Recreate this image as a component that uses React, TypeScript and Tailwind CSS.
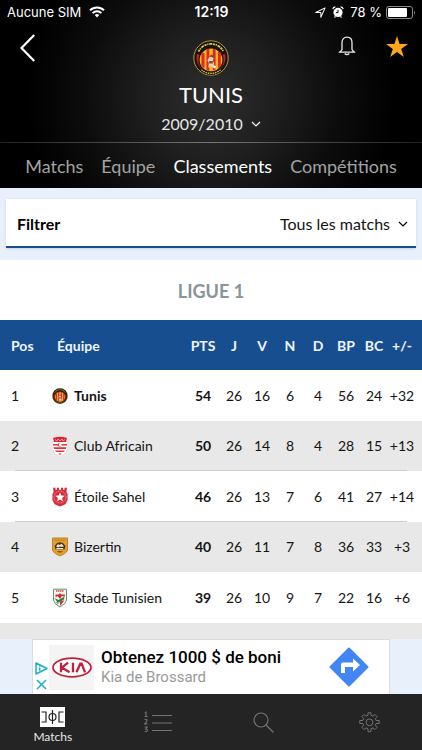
import { useState } from 'react';

type Team = {
  pos: number;
  name: string;
  crest: () => React.JSX.Element;
  pts: number;
  stats: number[];
  diff: string;
};

const TunisCrest = ({ className }: { className: string }) => (
  <svg viewBox="0 0 36 36" className={className} aria-hidden="true">
    <circle cx="18" cy="18" r="17.2" fill="#171512" stroke="#b39a3c" strokeWidth="1" />
    <path d="M4 14a14.500 14.500 0 1 0 28 0l-3 1v8q-4 8-11 8T7 23v-8z" fill="#c5202b" />
    <circle cx="18" cy="20" r="12" fill="#f5b719" stroke="#171512" strokeWidth="1.200" />
    <path d="M8.500 13h3v15.500l-3-3zM13.500 9h2.800v22l-2.800-1zM19.800 9h2.800v20.500l-2.800 1zM25 12h2.800v13.500l-2.800 3z" fill="#e0242b" />
    <path d="M5.300 12a13.900 13.900 0 0 1 25.400 0" fill="none" stroke="#171512" strokeWidth="4" />
    <path d="M5.500 11.600a14 14 0 0 1 25 0" fill="none" stroke="#e3c748" strokeWidth="1.800" strokeDasharray="2.200 .7 1.200 .8 3 .7" />
    <path d="M8.400 29.500a14.600 14.600 0 0 0 19.200 0" fill="none" stroke="#171512" strokeWidth="3" />
    <path d="M8.400 29.800a14.800 14.800 0 0 0 19.200 0" fill="none" stroke="#d2b43f" strokeWidth="1.400" strokeDasharray="1.600 .8" />
    <path d="M16.200 17.200l3-1 1.400 2-.8 2.400 1.400 2.800-.8 4.200h-1.800l-.6-2.800-1 2.800h-1.600l.4-5-1.400-2z" fill="#e6cfae" />
    <path d="M15.800 16.400l3-1.800 2.200 1.600-1 1.400zM16.200 21h3.600v2.600h-3.600z" fill="#6b5634" />
    <circle cx="21.600" cy="27" r="1.400" fill="#fff" />
  </svg>
);

const SmallTunis = () => <TunisCrest className="h-4 w-4 shrink-0" />;

const AfricainCrest = () => (
  <svg viewBox="0 0 16 20" className="h-5 w-4 shrink-0" aria-hidden="true">
    <path d="M1 6h14v7q-2 5-7 6.500q-5-1.500-7-6.500z" fill="#fff" />
    <path d="M1 2q7-2.400 14 0l-1 4H2z" fill="#dc2634" />
    <path d="M3 3.600l2 1.400 1-2 2 2 2-2 1 2 2-1.400" fill="none" stroke="#f6c4c7" strokeWidth=".7" />
    <path d="M1 8h5.500v1.600H1zM9.500 8H15v1.600H9.500zM1.500 11.300h13l-.6 1.600H2zM3 14.600h10l-1.400 1.500H4.600zM6.300 17.600h3.400L8 19z" fill="#e3303c" />
    <path d="M8 6.800a2 2 0 1 0 1.200 3.500 1.700 1.700 0 1 1 0-3z" fill="#dc2634" />
  </svg>
);

const EtoileCrest = () => (
  <svg viewBox="0 0 16 20" className="h-5 w-4 shrink-0" aria-hidden="true">
    <path d="M1 .8h2.500v2h1.500v-2h2v2h2v-2h2v2h1.500v-2H15l-.6 4.200 1.200 2v6l-2.200 4.200L8 19.500l-5.400-2.300L.4 13V7l1.200-2z" fill="#d62c3c" />
    <circle cx="8" cy="10" r="6" fill="none" stroke="#f3b3b8" strokeWidth=".8" strokeDasharray="1 .7" />
    <path d="M8 5.200l1.300 3.200 3.500.3-2.700 2.200.9 3.500-3-1.900-3 1.900.9-3.500-2.700-2.200 3.500-.3z" fill="#fff" />
  </svg>
);

const BizertinCrest = () => (
  <svg viewBox="0 0 16 20" className="h-5 w-4 shrink-0" aria-hidden="true">
    <path d="M.5 1h15v12.500q-1.500 3-7.500 5.500Q2 16.500.5 13.500z" fill="#e9a02b" stroke="#b57b22" strokeWidth=".9" />
    <path d="M2.500 3.200h11" stroke="#b57b22" strokeWidth="1.200" strokeDasharray="1.200 .5" />
    <path d="M2.500 9l2.500-3 3-.8L11 6l2.500 3-1 3.500H3.500z" fill="#3f3420" />
    <path d="M4 9.400l2-2.400 1.500 1 2-1.300 2.500 2.500-2 .9-2-.7-1.800 1zM4.500 11h6.500l.5 1.200H4z" fill="#f2e3c0" />
    <path d="M5 14h6l-1.500 1.500h-3z" fill="#7d5a20" />
  </svg>
);

const StadeCrest = () => (
  <svg viewBox="0 0 16 20" className="h-5 w-4 shrink-0" aria-hidden="true">
    <path d="M1.500 1.200h13V12q-.5 4-6.500 7-6-3-6.500-7z" fill="#f7f7f2" stroke="#5f9468" strokeWidth="1" />
    <path d="M4 3h8" stroke="#d9444d" strokeWidth="1.500" strokeDasharray="1.500 .5" />
    <path d="M3.500 6.500h3l1.500-1.300 1.500 1.300h3.300v2.200l-3-.7L8 11 5.800 8.300l-2.300.6z" fill="#d8292f" />
    <path d="M2.500 10l4 2 5.700-3.200v2.400l-4.500 3-2.200.2z" fill="#2f7f45" />
    <path d="M8 13.500l4.500-1.300L8 18z" fill="#d8292f" />
    <path d="M3.500 13.500l3 1.500-.5 1.500z" fill="#3b8b50" />
  </svg>
);

const teams: Team[] = [
  { pos: 1, name: 'Tunis', crest: SmallTunis, pts: 54, stats: [26, 16, 6, 4, 56, 24], diff: '+32' },
  { pos: 2, name: 'Club Africain', crest: AfricainCrest, pts: 50, stats: [26, 14, 8, 4, 28, 15], diff: '+13' },
  { pos: 3, name: 'Étoile Sahel', crest: EtoileCrest, pts: 46, stats: [26, 13, 7, 6, 41, 27], diff: '+14' },
  { pos: 4, name: 'Bizertin', crest: BizertinCrest, pts: 40, stats: [26, 11, 7, 8, 36, 33], diff: '+3' },
  { pos: 5, name: 'Stade Tunisien', crest: StadeCrest, pts: 39, stats: [26, 10, 9, 7, 22, 16], diff: '+6' },
];

const sections = ['Matchs', 'Équipe', 'Classements', 'Compétitions'];

const Chevron = () => (
  <svg viewBox="0 0 10 6" className="pointer-events-none h-[6px] w-[10px]" fill="none" stroke="currentColor" strokeWidth="1.2" aria-hidden="true">
    <path d="M1 1l4 4 4-4" />
  </svg>
);

const StatusBar = () => (
  <div className="grid h-6 grid-cols-3 items-center pl-[7px] pr-[6px] font-['Inter',sans-serif] text-[13px] leading-6 text-white">
    <div className="flex items-center gap-2">
      <span className="whitespace-nowrap">Aucune SIM</span>
      <svg viewBox="0 0 16 12" className="h-3 w-4" fill="none" stroke="#fff" strokeWidth="2" aria-hidden="true">
        <path d="M1 4.300a10 10 0 0 1 14 0M3.600 7.100a6.200 6.200 0 0 1 8.800 0" />
        <path d="M5.700 9a3.300 3.300 0 0 1 4.600 0L8 11.500z" fill="#fff" stroke="none" />
      </svg>
    </div>
    <span className="text-center text-sm font-semibold">12:19</span>
    <div className="flex items-center justify-end gap-[6px]">
      <svg viewBox="0 0 12 12" className="h-[11px] w-[11px] shrink-0" fill="none" stroke="#fff" strokeWidth="1.100" strokeLinejoin="round" aria-hidden="true">
        <path d="M.8 6L11 1 6.400 11.200V6z" />
      </svg>
      <svg viewBox="0 0 12 12" className="h-3 w-3 shrink-0" aria-hidden="true">
        <circle cx="6" cy="6.400" r="4.600" fill="#fff" />
        <path d="M.8 3.200A3 3 0 0 1 3.400.8M8.600.8a3 3 0 0 1 2.600 2.400M2.500 11.500l1-1.200M9.500 11.500l-1-1.200" stroke="#fff" strokeWidth="1.200" fill="none" />
        <path d="M6 3.800v2.800H3.900" stroke="#000" fill="none" />
      </svg>
      <span className="whitespace-nowrap">78 %</span>
      <svg viewBox="0 0 30 13" className="-ml-[2px] h-[13px] w-[30px] shrink-0" aria-hidden="true">
        <rect x=".5" y=".5" width="26" height="12" rx="2.500" fill="none" stroke="#8a8a8a" />
        <rect x="2" y="2" width="19" height="9" rx="1" fill="#fff" />
        <path d="M28 4.500q1.800 2 0 4z" fill="#8a8a8a" />
      </svg>
    </div>
  </div>
);

const Header = () => {
  const [section, setSection] = useState('Classements');

  return (
    <header className="bg-black bg-[radial-gradient(circle_at_50%_98px,#2d2d2d_0,#202020_60px,#0d0d0d_125px,#000_185px)] text-white">
      <StatusBar />
      <div className="grid h-[118px] grid-cols-[80px_1fr_80px]">
        <button type="button" aria-label="Retour" className="flex items-start pl-5 pt-[10px]">
          <svg viewBox="0 0 16 28" className="h-7 w-4" fill="none" stroke="#fff" strokeWidth="2.200" aria-hidden="true">
            <path d="M14.200 1L1.500 14l12.700 13" />
          </svg>
        </button>
        <div className="flex flex-col items-center pt-4">
          <TunisCrest className="h-9 w-9" />
          <h1 className="mt-1 text-[22px] leading-[30px]">TUNIS</h1>
          <div className="flex items-center gap-2">
            <select
              aria-label="Saison"
              className="h-7 [field-sizing:content] appearance-none bg-transparent py-[2px] text-base leading-6 text-[#e6e6e6]"
            >
              <option>2009/2010</option>
            </select>
            <Chevron />
          </div>
        </div>
        <div className="flex items-start justify-end gap-[30px] pr-[14px] pt-3">
          <button type="button" aria-label="Notifications">
            <svg viewBox="0 0 18 20" className="h-5 w-[18px]" fill="none" stroke="#e8e8e8" strokeWidth="1.300" strokeLinejoin="round" aria-hidden="true">
              <path d="M4 13.500V6.800C4 3.300 6 1.200 9 1.200s5 2.100 5 5.600v6.700q.5 1.400 2.800 2.700H1.200Q3.500 14.900 4 13.500z" />
              <path d="M6.700 17.400q2.300 2.400 4.600 0" strokeWidth="1.500" />
            </svg>
          </button>
          <button type="button" aria-label="Favori">
            <svg viewBox="0 0 22 21" className="h-[21px] w-[22px]" aria-hidden="true">
              <path d="M11 0l2.600 8H22l-6.800 4.900 2.600 8.100L11 16l-6.800 5 2.600-8.100L0 8h8.400z" fill="#ffa61c" />
            </svg>
          </button>
        </div>
      </div>
      <div className="h-px bg-gradient-to-r from-[#222] via-[#777] to-[#222]" />
      <nav className="flex h-[45px] items-center justify-center gap-[18px] text-lg">
        {sections.map((s) => (
          <button
            key={s}
            type="button"
            onClick={() => setSection(s)}
            className={s === section ? 'text-white' : 'text-[#a3a3a3]'}
          >
            {s}
          </button>
        ))}
      </nav>
    </header>
  );
};

const Standings = () => (
  <table className="w-full table-fixed border-collapse text-sm text-[#141414]">
    <colgroup>
      <col className="w-[46px]" />
      <col />
      <col className="w-[34px]" />
      <col className="w-7" />
      <col className="w-7" />
      <col className="w-7" />
      <col className="w-7" />
      <col className="w-7" />
      <col className="w-7" />
      <col className="w-[34px]" />
    </colgroup>
    <thead>
      <tr className="h-[50px] bg-[#174e8f] text-[#f0f4f9]">
        <th scope="col" className="pl-[11px] pt-[2px] text-left">Pos</th>
        <th scope="col" className="pl-[11px] pt-[2px] text-left">Équipe</th>
        {['PTS', 'J', 'V', 'N', 'D', 'BP', 'BC'].map((h) => (
          <th key={h} scope="col" className="pt-[2px] text-center">{h}</th>
        ))}
        <th scope="col" className="pt-[2px] pr-[6px] text-center">+/-</th>
      </tr>
    </thead>
    <tbody>
      {teams.map((t, i) => (
        <tr
          key={t.pos}
          className={`odd:h-[51px] even:h-[50px] odd:bg-white even:bg-[#e8e8e8] ${
            i === 1 || i === 2
              ? 'bg-[linear-gradient(#cbd0d0,#cbd0d0)] bg-[length:calc(100%-30px)_1px] bg-bottom bg-no-repeat'
              : ''
          }`}
        >
          <td className="pl-[11px]">{t.pos}</td>
          <td className="pl-[6px]">
            <div className={`flex items-center gap-[6px] whitespace-nowrap ${i === 0 ? 'font-bold' : ''}`}>
              <t.crest />
              {t.name}
            </div>
          </td>
          <td className="text-center font-bold">{t.pts}</td>
          {t.stats.map((n, j) => (
            <td key={j} className="text-center">{n}</td>
          ))}
          <td className="pr-[6px] text-center">{t.diff}</td>
        </tr>
      ))}
      <tr className="h-4 bg-[#e8e8e8]">
        <td colSpan={10} />
      </tr>
    </tbody>
  </table>
);

const Ad = () => (
  <aside className="flex h-[55px] justify-center bg-[#e8f1fb] px-8">
    <div className="flex w-full max-w-[480px] items-center border border-b-0 border-[#dcdcdc] bg-white font-['Roboto',sans-serif]">
      <div className="flex w-4 shrink-0 flex-col items-center gap-1 pt-[18px]">
        <svg viewBox="0 0 13 13" className="h-[13px] w-[13px]" fill="none" stroke="#19aecb" strokeWidth="1.500" strokeLinejoin="round" aria-hidden="true">
          <path d="M1 1l11 5.500L1 12zM4.700 5.600v3.200M4.700 3.600v1" />
        </svg>
        <button type="button" aria-label="Fermer">
          <svg viewBox="0 0 11 11" className="h-[11px] w-[11px]" stroke="#19aecb" strokeWidth="1.500" aria-hidden="true">
            <path d="M1 1l9 9M10 1l-9 9" />
          </svg>
        </button>
      </div>
      <div className="flex h-[45px] w-[45px] shrink-0 items-center justify-center bg-[#f4f4f4]">
        <svg viewBox="0 0 40 21" className="h-[21px] w-10" fill="none" aria-label="Kia">
          <ellipse cx="20" cy="10.500" rx="19" ry="9.300" fill="#fff" stroke="#c0203a" strokeWidth="1.700" />
          <path d="M9 5.700v9.600M16 5.700l-6 5 7.500 4.600M21 5.700v9.600M24.500 15.300l3.800-8.600h1.400l3.300 8.600" stroke="#c0203a" strokeWidth="2.300" />
        </svg>
      </div>
      <div className="min-w-0 flex-1 pl-[7px]">
        <p className="whitespace-nowrap text-[17px] leading-5 font-medium text-black">Obtenez 1000 $ de boni</p>
        <p className="text-[15px] leading-5 text-[#999]">Kia de Brossard</p>
      </div>
      <a href="#directions" aria-label="Itinéraire" className="mr-5 shrink-0">
        <svg viewBox="0 0 40 40" className="h-10 w-10" aria-hidden="true">
          <path d="M20 1.500L38.500 20 20 38.500 1.500 20z" fill="#4285f4" stroke="#4285f4" strokeWidth="2" strokeLinejoin="round" />
          <path d="M12 26v-8.500q0-2 2-2h10v-4l7 6.500-7 6.500v-4.600h-8V26z" fill="#fff" />
        </svg>
      </a>
    </div>
  </aside>
);

const TabBar = () => (
  <nav className="grid h-14 grid-cols-4 bg-[#242424] text-[#747474]">
    <button type="button" className="flex flex-col items-center pt-[13px] text-xs leading-4 text-[#e8e8e8]">
      <svg viewBox="0 0 25 20" className="mb-[2px] h-5 w-[25px]" fill="none" stroke="#222" strokeWidth="1.200" aria-hidden="true">
        <path d="M0 0h25v20H0z" fill="#fff" stroke="none" />
        <path d="M1.500 5H6v10H1.500M23.500 5H19v10h4.500M12.500 3v14" />
        <circle cx="12.500" cy="10" r="3.500" />
      </svg>
      Matchs
    </button>
    <button type="button" aria-label="Classements" className="flex items-start justify-center pt-[17px]">
      <svg viewBox="0 0 28 22" className="h-[22px] w-7" fill="none" stroke="currentColor" aria-hidden="true">
        <path d="M8 4.500h20M8 12h20M8 19.500h20" strokeWidth="1.200" />
        <path d="M.8 2l1.200-.9V5.500M.6 5.500h3M.6 9q1.400-1.500 2.400-.2Q3.500 10.500.6 13h3M.6 16h2.600l-1.400 2q2 .2 1.500 1.800-.9 1.500-2.700.5" strokeWidth="1.100" />
      </svg>
    </button>
    <button type="button" aria-label="Rechercher" className="flex items-start justify-center pt-[18px]">
      <svg viewBox="0 0 21 21" className="h-[21px] w-[21px]" fill="none" stroke="currentColor" strokeWidth="1.200" aria-hidden="true">
        <circle cx="8" cy="8" r="7" />
        <path d="M13 13l7.500 7.500" />
      </svg>
    </button>
    <button type="button" aria-label="Réglages" className="flex items-start justify-center pt-[18px]">
      <svg viewBox="0 0 21 21" className="h-[21px] w-[21px]" fill="none" stroke="currentColor" strokeWidth="1" strokeLinejoin="round" aria-hidden="true">
        <path d="M9 .8h3v2.500l2 .9 1.900-1.800 2.200 2.200-1.800 1.900.9 2h3v3h-3l-.9 2 1.800 1.900-2.200 2.200-1.900-1.800-2 .9v3H9v-3l-2-.9-1.900 1.800-2.200-2.200 1.800-1.900-.9-2h-3v-3h3l.9-2-1.800-1.900 2.200-2.200L7 4.200l2-.9z" />
        <circle cx="10.500" cy="10.300" r="3.400" />
      </svg>
    </button>
  </nav>
);

const App = () => {
  const [filter, setFilter] = useState('Tous les matchs');

  return (
    <div className="min-h-screen bg-white font-['Lato',sans-serif]">
      <Header />
      <main>
        <div className="bg-[#e8f1fb] px-[6px] pt-[11px] pb-[12px]">
          <div className="flex h-[49px] items-center justify-between border-b-2 border-[#174e8f] bg-white pt-[2px] pl-[11px] pr-2 text-base shadow">
            <label htmlFor="filter" className="font-bold text-black">Filtrer</label>
            <div className="flex items-center gap-2">
              <select
                id="filter"
                value={filter}
                onChange={(e) => setFilter(e.target.value)}
                className="h-[30px] [field-sizing:content] appearance-none bg-transparent py-[3px] text-[#141414]"
              >
                <option>Tous les matchs</option>
              </select>
              <Chevron />
            </div>
          </div>
        </div>
        <h2 className="pt-[2px] text-center text-lg leading-[58px] font-bold text-[#87949a]">LIGUE 1</h2>
        <Standings />
      </main>
      <Ad />
      <TabBar />
    </div>
  );
};

export default App;
